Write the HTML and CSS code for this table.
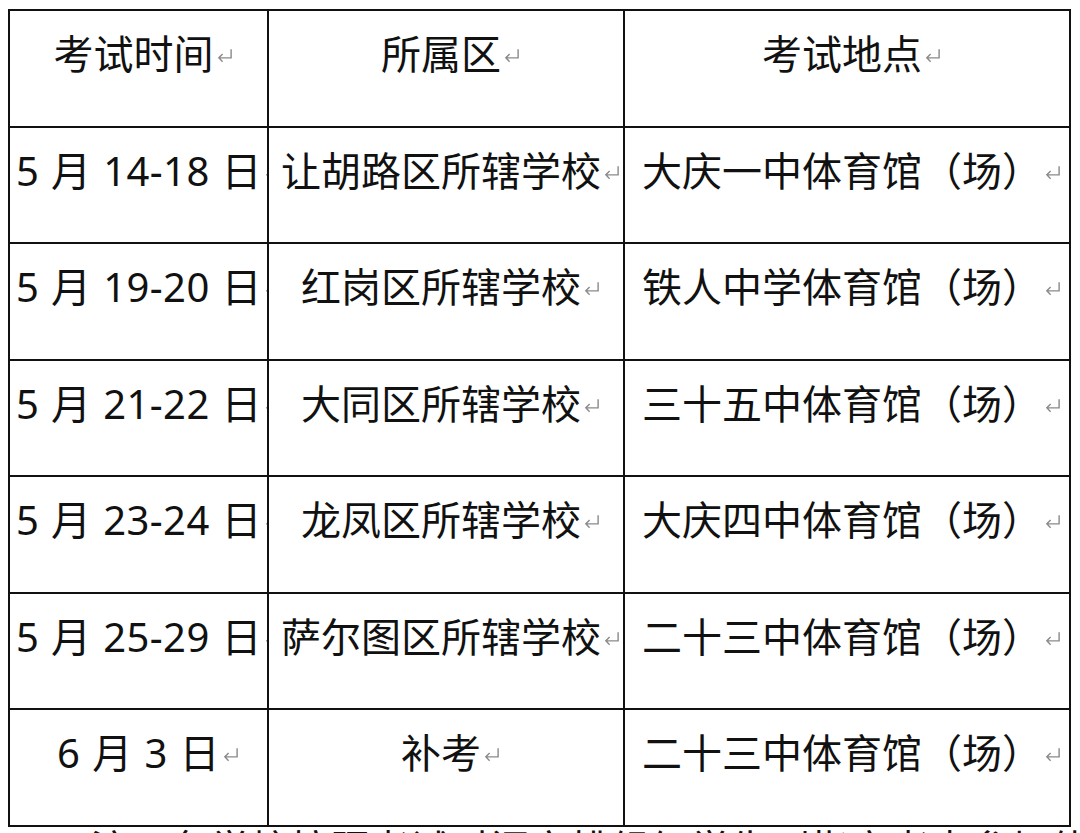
FILE: index.html
```html
<!DOCTYPE html>
<html lang="zh-CN">
<head>
<meta charset="utf-8">
<title>考试安排</title>
<link rel="stylesheet" href="styles.css">
</head>
<body>
<table class="sched">
  <colgroup>
    <col class="c1"><col class="c2"><col class="c3">
  </colgroup>
  <tr>
    <td>考试时间<svg class="pm" viewBox="0 0 18 15"><path d="M16 1V10H3M7 6L3 10L7 14"/></svg></td>
    <td>所属区<svg class="pm" viewBox="0 0 18 15"><path d="M16 1V10H3M7 6L3 10L7 14"/></svg></td>
    <td>考试地点<svg class="pm" viewBox="0 0 18 15"><path d="M16 1V10H3M7 6L3 10L7 14"/></svg></td>
  </tr>
  <tr>
    <td class="date">5 月 14-18 日<svg class="pm" viewBox="0 0 18 15"><path d="M16 1V10H3M7 6L3 10L7 14"/></svg></td>
    <td>让胡路区所辖学校<svg class="pm" viewBox="0 0 18 15"><path d="M16 1V10H3M7 6L3 10L7 14"/></svg></td>
    <td>大庆一中体育馆（场）<svg class="pm" viewBox="0 0 18 15"><path d="M16 1V10H3M7 6L3 10L7 14"/></svg></td>
  </tr>
  <tr>
    <td class="date">5 月 19-20 日<svg class="pm" viewBox="0 0 18 15"><path d="M16 1V10H3M7 6L3 10L7 14"/></svg></td>
    <td>红岗区所辖学校<svg class="pm" viewBox="0 0 18 15"><path d="M16 1V10H3M7 6L3 10L7 14"/></svg></td>
    <td>铁人中学体育馆（场）<svg class="pm" viewBox="0 0 18 15"><path d="M16 1V10H3M7 6L3 10L7 14"/></svg></td>
  </tr>
  <tr>
    <td class="date">5 月 21-22 日<svg class="pm" viewBox="0 0 18 15"><path d="M16 1V10H3M7 6L3 10L7 14"/></svg></td>
    <td>大同区所辖学校<svg class="pm" viewBox="0 0 18 15"><path d="M16 1V10H3M7 6L3 10L7 14"/></svg></td>
    <td>三十五中体育馆（场）<svg class="pm" viewBox="0 0 18 15"><path d="M16 1V10H3M7 6L3 10L7 14"/></svg></td>
  </tr>
  <tr>
    <td class="date">5 月 23-24 日<svg class="pm" viewBox="0 0 18 15"><path d="M16 1V10H3M7 6L3 10L7 14"/></svg></td>
    <td>龙凤区所辖学校<svg class="pm" viewBox="0 0 18 15"><path d="M16 1V10H3M7 6L3 10L7 14"/></svg></td>
    <td>大庆四中体育馆（场）<svg class="pm" viewBox="0 0 18 15"><path d="M16 1V10H3M7 6L3 10L7 14"/></svg></td>
  </tr>
  <tr>
    <td class="date">5 月 25-29 日<svg class="pm" viewBox="0 0 18 15"><path d="M16 1V10H3M7 6L3 10L7 14"/></svg></td>
    <td>萨尔图区所辖学校<svg class="pm" viewBox="0 0 18 15"><path d="M16 1V10H3M7 6L3 10L7 14"/></svg></td>
    <td>二十三中体育馆（场）<svg class="pm" viewBox="0 0 18 15"><path d="M16 1V10H3M7 6L3 10L7 14"/></svg></td>
  </tr>
  <tr>
    <td class="date">6 月 3 日<svg class="pm" viewBox="0 0 18 15"><path d="M16 1V10H3M7 6L3 10L7 14"/></svg></td>
    <td>补考<svg class="pm" viewBox="0 0 18 15"><path d="M16 1V10H3M7 6L3 10L7 14"/></svg></td>
    <td>二十三中体育馆（场）<svg class="pm" viewBox="0 0 18 15"><path d="M16 1V10H3M7 6L3 10L7 14"/></svg></td>
  </tr>
</table>
<p class="note">注：各学校按照考试时间安排组织学生到指定考点参加体育考试。</p>
</body>
</html>
```
FILE: styles.css
```css
html, body {
  margin: 0;
  padding: 0;
  background: #fff;
  overflow: hidden;
}
body {
  font-family: "Noto Sans", "Noto Sans CJK SC", sans-serif;
  color: #111;
}
.sched {
  border-collapse: collapse;
  table-layout: fixed;
  width: 1062px;
  margin: 9px 0 0 8px;
}
.c1 { width: 259px; }
.c2 { width: 356px; }
.c3 { width: 446px; }
.sched td {
  border: 2px solid #111;
  height: 116.5px;
  box-sizing: border-box;
  padding: 23px 12px 0 2px;
  vertical-align: top;
  text-align: center;
  white-space: nowrap;
  overflow: hidden;
  font-size: 40px;
  line-height: 40px;
}
.sched td.date {
  padding-left: 6px;
  padding-right: 6px;
  letter-spacing: 0.4px;
  word-spacing: 1px;
}
.pm {
  width: 17px;
  height: 15px;
  margin-left: 2px;
  margin-right: -19px;
  vertical-align: 6px;
  fill: none;
  stroke: #8a8a8a;
  stroke-width: 1.5;
}
.note {
  margin: 2px 0 0 90px;
  font-size: 40px;
  line-height: 40px;
  white-space: nowrap;
}
```
